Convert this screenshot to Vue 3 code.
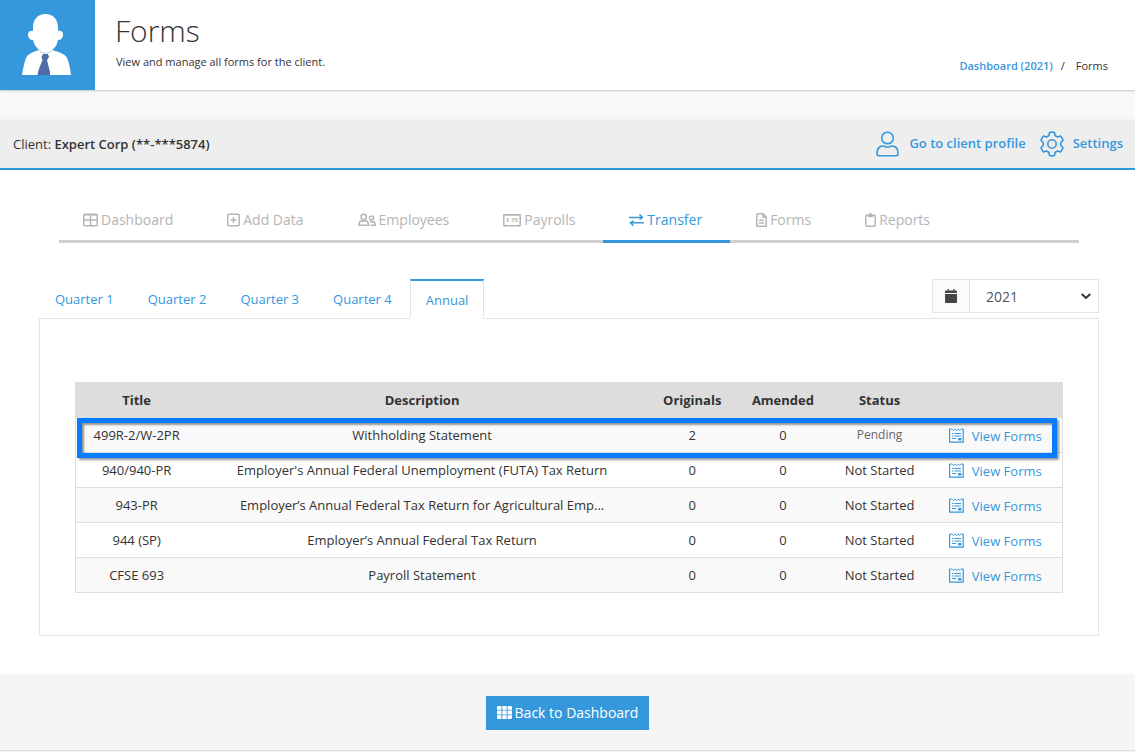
<script setup>
import { ref } from 'vue'

const year = ref('2021')
const navItems = [
  { id: 'dashboard', label: 'Dashboard', w: 15 },
  { id: 'add', label: 'Add Data', w: 13 },
  { id: 'employees', label: 'Employees', w: 18 },
  { id: 'payrolls', label: 'Payrolls', w: 18 },
  { id: 'transfer', label: 'Transfer', w: 15, active: true },
  { id: 'forms', label: 'Forms', w: 11 },
  { id: 'reports', label: 'Reports', w: 11 },
]
const tabs = ['Quarter 1', 'Quarter 2', 'Quarter 3', 'Quarter 4', 'Annual']
const activeTab = ref('Annual')
const rows = [
  { title: '499R-2/W-2PR', desc: 'Withholding Statement', originals: 2, amended: 0, status: 'Pending', marked: true },
  { title: '940/940-PR', desc: "Employer's Annual Federal Unemployment (FUTA) Tax Return", originals: 0, amended: 0, status: 'Not Started' },
  { title: '943-PR', desc: 'Employer’s Annual Federal Tax Return for Agricultural Emp...', originals: 0, amended: 0, status: 'Not Started' },
  { title: '944 (SP)', desc: 'Employer’s Annual Federal Tax Return', originals: 0, amended: 0, status: 'Not Started' },
  { title: 'CFSE 693', desc: 'Payroll Statement', originals: 0, amended: 0, status: 'Not Started' },
]
</script>

<template>
  <div class="page">
    <header class="top">
      <div class="avatar">
        <svg width="95" height="90" viewBox="0 0 95 90" aria-hidden="true">
          <path fill="#fff" d="M45.500 14C38 14 33 19 33 28v3c-5-1-6 4-4 7 1 2 3 2 4 2 1 5 4 8 6 10-6 2-11 4-13 8-2 5-3 11-4 17h49c-1-7-2-13-4-17-2-4-8-6-15-8 3-2 5-5 6-10 4 0 5-3 5-6 0-2-2-4-5-3v-3C58 19 53 14 45.500 14z" />
          <path fill="none" stroke="#b8cbd8" stroke-width="1" d="M38.500 50c2 2 4 3 7 3s5-1 7-3" />
          <path fill="#4f6ea8" d="M43 54h5l1 3-2 3 3 12v3H37.500l1-5 4-10-1-3z" />
        </svg>
      </div>
      <div class="heading">
        <h1>Forms</h1>
        <p>View and manage all forms for the client.</p>
      </div>
      <nav class="crumbs" aria-label="Breadcrumb">
        <a href="#">Dashboard (2021)</a><span class="slash">/</span><span>Forms</span>
      </nav>
    </header>

    <section class="client">
      <div class="client-name">Client: <strong>Expert Corp (**-***5874)</strong></div>
      <div class="client-links">
        <a href="#">
          <svg width="24" height="26" viewBox="0 0 24 26" fill="none" stroke="#3598dc" stroke-width="1.600">
            <circle cx="11.500" cy="7" r="5.800" />
            <path d="M1 22.500c0-5 2.500-7.500 6-7.500 1.500 0 2.500 1 4.500 1s3-1 4.500-1c3.500 0 6 2.500 6 7.500 0 1.500-.8 2.300-2 2.300H3c-1.200 0-2-.8-2-2.300z" />
          </svg>
          <span>Go to client profile</span>
        </a>
        <a href="#">
          <svg width="24" height="26" viewBox="0 0 24 26" fill="none" stroke="#3598dc" stroke-width="1.600" stroke-linejoin="round">
            <path d="M9.500 1.500Q12 .8 14.500 1.500L15 4.500 17.500 6 20.500 5Q22.500 7 23 9.500L20.800 11.500V14.500L23 16.500Q22.300 19 20.500 21L17.500 20 15 21.500 14.500 24.500Q12 25.200 9.500 24.500L9 21.500 6.500 20 3.500 21Q1.700 19 1 16.500L3.200 14.500V11.500L1 9.500Q1.700 7 3.500 5L6.500 6 9 4.500z" />
            <circle cx="12" cy="13" r="4.200" />
          </svg>
          <span>Settings</span>
        </a>
      </div>
    </section>

    <main class="main">
      <nav class="steps" aria-label="Sections">
        <a v-for="n in navItems" :key="n.id" href="#" :class="{ active: n.active }">
          <svg :width="n.w" height="14" :viewBox="`0 0 ${n.w} 14`" fill="none" stroke="currentColor" stroke-width="1.500" aria-hidden="true">
            <template v-if="n.id === 'dashboard'">
              <rect x=".8" y="1.300" width="13.400" height="11.400" rx="1" />
              <path d="M7.500 1.500v11M1 7h13" />
              <path d="M1 1.800h13" />
            </template>
            <template v-else-if="n.id === 'add'">
              <rect x=".8" y="1.300" width="11.400" height="11.400" rx="1" />
              <path d="M6.500 4v6M3.500 7h6" />
            </template>
            <template v-else-if="n.id === 'employees'">
              <circle cx="5.700" cy="4" r="2.700" />
              <path d="M1 12.300c0-3 1-4.300 2.500-4.300h4.400c1.500 0 2.500 1.300 2.500 4.300z" />
              <circle cx="13.500" cy="5" r="2" />
              <path d="M12 8.800h3c1.500 0 2.200 1.200 2.200 3.500h-5" />
            </template>
            <template v-else-if="n.id === 'payrolls'">
              <rect x=".8" y="1.800" width="16.400" height="10.900" rx=".5" />
              <path d="M.8 1.800h16.400" />
              <path stroke-width="1" d="M5.700 5.500H4.200v1.400h1.300v1.500H3.800M8.500 5.900H15M8.500 8.300h2M12 8.300h3M10 6v1.500M13 6v1.500" />
            </template>
            <template v-else-if="n.id === 'transfer'">
              <path d="M0 4.500h13M2 9.800h13M10.500 1.500l3 3-3 2M4.500 7.800l-3 2 3 3" />
            </template>
            <template v-else-if="n.id === 'forms'">
              <path d="M1.500.8h5.700l3 3.200v9.200H.8V1.500zM7 1v3.200h3M3 7.300h5M3 10h5" />
            </template>
            <template v-else>
              <rect x=".8" y="2.300" width="9.400" height="10.900" rx="1" />
              <path d="M2.800 2.500h5.400v1.700H2.800z" fill="currentColor" stroke="none" />
              <circle cx="5.500" cy="1.800" r="1" />
            </template>
          </svg>
          <span>{{ n.label }}</span>
        </a>
      </nav>

      <div class="tabbar">
        <div class="tabs" role="tablist">
          <button v-for="t in tabs" :key="t" type="button" role="tab" :aria-selected="activeTab === t" :class="{ on: activeTab === t }" @click="activeTab = t">{{ t }}</button>
        </div>
        <div class="year">
          <label for="year" aria-label="Year">
            <svg width="12" height="14" viewBox="0 0 12 14" fill="#444"><path d="M2.500 0h1.300v1.500h4.400V0h1.300v1.500H11q1 0 1 1V4H0V2.500q0-1 1-1h1.500zM0 5h12v8q0 1-1 1H1q-1 0-1-1z" /></svg>
          </label>
          <div class="pick">
            <select id="year" v-model="year">
              <option>2021</option>
              <option>2020</option>
            </select>
            <svg width="10" height="7" viewBox="0 0 10 7" fill="none" stroke="#333" stroke-width="2"><path d="M.7 1l4.300 4 4.300-4" /></svg>
          </div>
        </div>
      </div>

      <div class="panel">
        <div class="grid">
          <table>
            <colgroup>
              <col class="c-title" /><col class="c-desc" /><col class="c-num" /><col class="c-num" /><col class="c-status" /><col />
            </colgroup>
            <thead>
              <tr>
                <th>Title</th><th>Description</th><th>Originals</th><th>Amended</th><th>Status</th><th></th>
              </tr>
            </thead>
            <tbody>
              <tr v-for="r in rows" :key="r.title">
                <td>{{ r.title }}</td>
                <td>{{ r.desc }}</td>
                <td>{{ r.originals }}</td>
                <td>{{ r.amended }}</td>
                <td :class="{ pending: r.marked }">{{ r.status }}</td>
                <td class="action">
                  <a href="#">
                    <svg width="15" height="15" viewBox="0 0 15 15" fill="none" stroke="#3598dc">
                      <path stroke-width="1.200" d="M.6 1v13.200h13.600V1M.6 1h1.900M12.300 1h1.900" />
                      <path d="M2.500 .8l1.700 1.700L5.800 1l1.700 1.500L9.200 1l1.600 1.500L12.500 .8" />
                      <path d="M3 5.500h1.500M5.500 5.500h6.500M3 8h1.500M5.500 8h6.500M3 10.500h4" />
                      <path fill="#3598dc" d="M9.500 10.500h2.500v1.500h-2.500z" />
                    </svg>
                    <span>View Forms</span>
                  </a>
                </td>
              </tr>
            </tbody>
          </table>
          <div class="marker"></div>
        </div>
      </div>
    </main>

    <footer class="foot">
      <button type="button">
        <svg width="15" height="13" viewBox="0 0 15 13" fill="#fff"><path d="M1 0h3.400v3.700H0V1zM5.300 0h4.400v3.700H5.300zM10.600 0H14l1 1v2.700h-4.400zM0 4.600h4.400v3.800H0zM5.300 4.600h4.400v3.800H5.300zM10.600 4.600H15v3.800h-4.400zM0 9.300h4.400V13H1l-1-1zM5.300 9.300h4.400V13H5.300zM10.600 9.300H15V12l-1 1h-3.400z" /></svg>
        <span>Back to Dashboard</span>
      </button>
    </footer>
  </div>
</template>

<style>
body {
  background: #f7f8fa;
}
</style>

<style scoped>
.page {
  font-family: "Open Sans", sans-serif;
  font-size: 13px;
  line-height: 18px;
  color: #333;
}
.page * {
  box-sizing: border-box;
}
a {
  color: #3598dc;
  text-decoration: none;
}
button,
select {
  font-family: inherit;
  cursor: pointer;
}
svg {
  display: block;
  flex: none;
}
.top {
  display: flex;
  height: 90px;
  background: #fff;
  box-shadow: 0 1px 2px rgba(0, 0, 0, 0.2);
}
.avatar {
  width: 95px;
  background: #3598dc;
}
.heading {
  padding: 11px 0 0 20px;
}
h1 {
  margin: 0;
  font-size: 30px;
  font-weight: 300;
  line-height: 40px;
}
.heading p {
  margin: 0;
  padding: 2px 1px;
  font-size: 11px;
}
.crumbs {
  display: flex;
  margin-left: auto;
  padding: 57px 27px 0 0;
  font-size: 11px;
}
.crumbs a {
  font-weight: 600;
}
.slash {
  padding: 0 11px 0 8px;
}
.client {
  display: flex;
  align-items: center;
  justify-content: space-between;
  height: 50px;
  margin-top: 30px;
  padding: 0 12px 0 13px;
  background: #eee;
  border-bottom: 2px solid #3598dc;
  box-shadow: 0 -1px 3px rgba(0, 0, 0, 0.03);
}
.client strong {
  font-weight: 600;
}
.client-links {
  display: flex;
  gap: 14px;
}
.client-links a {
  display: flex;
  align-items: center;
  gap: 9px;
  font-weight: 600;
}
.client-links span {
  padding-bottom: 2px;
}
.main {
  padding: 30px 36px 39px 39px;
  background: #fff;
}
.steps {
  display: flex;
  margin: 0 20px;
  border-bottom: 3px solid #d0d0d0;
}
.steps a {
  display: flex;
  align-items: center;
  gap: 3px;
  height: 43px;
  margin-bottom: -3px;
  padding: 0 28px 0 26px;
  font-size: 14px;
  color: #b5b5b5;
  border-bottom: 3px solid transparent;
}
.steps a:first-child {
  padding-left: 24px;
}
.steps a.active {
  color: #3598dc;
  border-color: #3598dc;
}
.tabbar {
  display: flex;
  justify-content: space-between;
  align-items: flex-start;
  margin-top: 36px;
}
.tabs {
  display: flex;
}
.tabs button {
  height: 40px;
  margin-right: 2px;
  padding: 0 15px;
  font-size: 13px;
  color: #3598dc;
  background: none;
  border: 1px solid transparent;
}
.tabs button.on {
  margin-right: 0;
  background: #fff;
  border-color: #e4e4e4;
  border-top: 2px solid #3598dc;
  border-bottom-color: #fff;
  position: relative;
}
.year {
  display: flex;
  height: 34px;
  border: 1px solid #e4e4e4;
}
.year label {
  display: flex;
  align-items: center;
  justify-content: center;
  width: 37px;
  background: #fafbfc;
  border-right: 1px solid #e4e4e4;
}
.pick {
  position: relative;
  width: 128px;
}
.pick select {
  appearance: none;
  width: 100%;
  height: 100%;
  padding: 0 28px 0 16px;
  font-size: 14px;
  color: #555;
  background: #fff;
  border: 0;
}
.pick svg {
  position: absolute;
  right: 7px;
  top: 13px;
  pointer-events: none;
}
.panel {
  margin-top: -1px;
  padding: 63px 35px 42px;
  border: 1px solid #e4e4e4;
}
.grid {
  position: relative;
}
table {
  width: 100%;
  table-layout: fixed;
  border-collapse: separate;
  border-spacing: 0;
  border: 1px solid #ddd;
  border-width: 0 1px;
}
.c-title {
  width: 12.300%;
}
.c-desc {
  width: 45.600%;
}
.c-num {
  width: 9.200%;
}
.c-status {
  width: 10.400%;
}
th {
  height: 36px;
  padding: 0;
  font-weight: 700;
  background: #ddd;
}
td {
  height: 35px;
  padding: 0;
  text-align: center;
  border-bottom: 1px solid #ddd;
}
tbody tr:nth-child(odd) {
  background: #f9f9f9;
}
td.pending {
  font-size: 12px;
  color: #666;
}
.action a {
  display: flex;
  align-items: center;
  gap: 8px;
  padding-left: 18px;
}
.action span {
  padding-top: 2px;
}
.marker {
  position: absolute;
  top: 36px;
  left: 2px;
  right: 6px;
  height: 40px;
  border: 5px solid #087cff;
  box-shadow: 2px 2px 2px rgba(0, 0, 0, 0.4), inset 2px 2px 2px rgba(0, 0, 0, 0.4);
  pointer-events: none;
}
.foot {
  display: flex;
  justify-content: center;
  padding: 21px 0 20px;
  margin-bottom: 1px;
  background: #f5f5f5;
  border-bottom: 1px solid #ddd;
  box-shadow: 0 -1px 4px rgba(0, 0, 0, 0.04);
}
.foot button {
  display: flex;
  align-items: center;
  gap: 3px;
  height: 34px;
  padding: 0 11px 2px;
  font-size: 14px;
  color: #fff;
  background: #3598dc;
  border: 0;
}
</style>
